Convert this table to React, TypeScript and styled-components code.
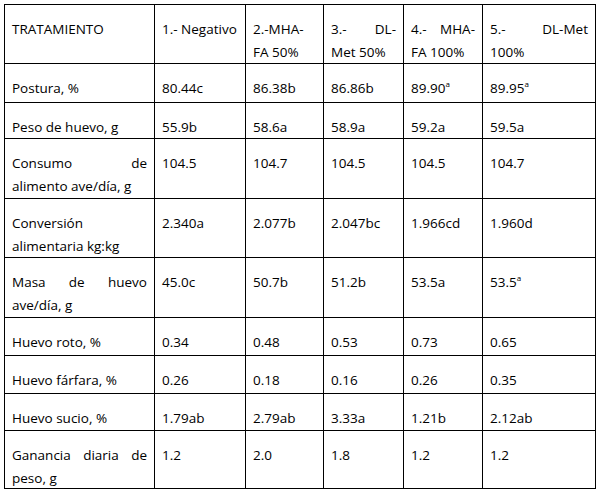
import React from 'react';
import styled, {createGlobalStyle} from 'styled-components';

const GlobalStyle = createGlobalStyle`
  body {
    margin: 0;
    background: #fff;
    font-family: "Open Sans", "Noto Sans", sans-serif;
    color: #000;
  }
`;

const Page = styled.div`
  padding: 4px;
`;

const Grid = styled.div<{$cols: number[]; $rows: number[]}>`
  display: grid;
  width: max-content;
  grid-template-columns: ${(p) => p.$cols.map((c) => `${c}px`).join(' ')};
  grid-template-rows: ${(p) => p.$rows.map((r) => `${r}px`).join(' ')};
  gap: 1px;
  background: #000;
  border: 1px solid #000;
`;

const TableCell = styled.div`
  background: #fff;
  padding: 13px 7px 0;
  font-size: 13.5px;
  line-height: 23px;
  text-align: left;
  white-space: nowrap;
  overflow: hidden;
`;

const LineBox = styled.div<{$justify?: boolean}>`
  display: flex;
  justify-content: ${(p) => (p.$justify ? 'space-between' : 'flex-start')};
  gap: 4px;
`;

const Sup = styled.sup`
  font-size: 8px;
  line-height: 0;
  vertical-align: 6px;
`;

// splits words so a justified line spreads them to both edges
const Line = ({text, justify}: {text: string; justify?: boolean}) => (
    <LineBox $justify={justify}>
        {justify ? text.split(' ').map((w, i) => <span key={i}>{w}</span>) : <span>{text}</span>}
    </LineBox>
);

type Cell = React.ReactNode;

const COLS = [149, 90, 77, 79, 78, 112];

const HEADER: Cell[] = [
    'TRATAMIENTO',
    '1.- Negativo',
    <><Line justify text="2.-MHA-"/><Line text="FA 50%"/></>,
    <><Line justify text="3.- DL-"/><Line text="Met 50%"/></>,
    <><Line justify text="4.- MHA-"/><Line text="FA 100%"/></>,
    <><Line justify text="5.- DL-Met"/><Line text="100%"/></>,
];

const ROWS: {height: number; cells: Cell[]}[] = [
    {height: 38, cells: ['Postura, %', '80.44c', '86.38b', '86.86b', <>89.90<Sup>a</Sup></>, <>89.95<Sup>a</Sup></>]},
    {height: 35, cells: ['Peso de huevo, g', '55.9b', '58.6a', '58.9a', '59.2a', '59.5a']},
    {height: 59, cells: [<><Line justify text="Consumo de"/><Line text="alimento ave/día, g"/></>, '104.5', '104.7', '104.5', '104.5', '104.7']},
    {height: 58, cells: [<><Line text="Conversión"/><Line text="alimentaria kg:kg"/></>, '2.340a', '2.077b', '2.047bc', '1.966cd', '1.960d']},
    {height: 59, cells: [<><Line justify text="Masa de huevo"/><Line text="ave/día, g"/></>, '45.0c', '50.7b', '51.2b', '53.5a', <>53.5<Sup>a</Sup></>]},
    {height: 37, cells: ['Huevo roto, %', '0.34', '0.48', '0.53', '0.73', '0.65']},
    {height: 37, cells: ['Huevo fárfara, %', '0.26', '0.18', '0.16', '0.26', '0.35']},
    {height: 36, cells: ['Huevo sucio, %', '1.79ab', '2.79ab', '3.33a', '1.21b', '2.12ab']},
    {height: 57, cells: [<><Line justify text="Ganancia diaria de"/><Line text="peso, g"/></>, '1.2', '2.0', '1.8', '1.2', '1.2']},
];

const App = () => {
    const rowHeights = [58, ...ROWS.map((r) => r.height)];

    return (
        <>
            <GlobalStyle/>
            <Page>
                <Grid $cols={COLS} $rows={rowHeights}>
                    {HEADER.map((cell, i) => (
                        <TableCell key={`h${i}`}>{cell}</TableCell>
                    ))}
                    {ROWS.map((row, r) =>
                        row.cells.map((cell, c) => (
                            <TableCell key={`${r}-${c}`}>{cell}</TableCell>
                        ))
                    )}
                </Grid>
            </Page>
        </>
    );
};

export default App;
